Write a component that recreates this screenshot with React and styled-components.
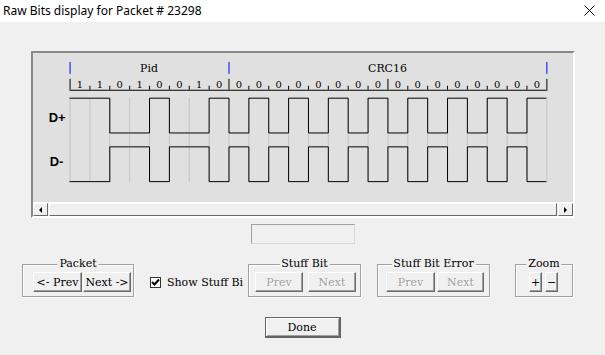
import styled, { createGlobalStyle } from "styled-components";

const GlobalStyle = createGlobalStyle`
  html, body {
    margin: 0;
    padding: 0;
    background: #f0f0f0;
  }
  body {
    width: 605px;
    height: 355px;
    overflow: hidden;
  }
`;

const UI_FONT = `"DejaVu Serif", "Liberation Serif", serif`;

const PID_BITS = [1, 1, 0, 1, 0, 0, 1, 0];
const CRC_BITS = new Array(16).fill(0);
const BITS = [...PID_BITS, ...CRC_BITS];
const X0 = 68;
const BIT_W = 20;

const Window = styled.div`
  width: 605px;
  height: 355px;
  background: #f0f0f0;
  display: flex;
  flex-direction: column;
  font-family: ${UI_FONT};
  color: #000;
`;

const TitleBar = styled.div`
  height: 22px;
  flex: none;
  background: #fff;
  display: flex;
  align-items: center;
  justify-content: space-between;
  padding: 0 10px 2px 3px;
  box-sizing: border-box;
  font-family: "Noto Sans", sans-serif;
  font-size: 12px;
`;

const Body = styled.div`
  display: flex;
  flex-direction: column;
  align-items: flex-start;
  padding-top: 29px;
`;

const Panel = styled.div`
  margin-left: 31px;
  width: 544px;
  height: 167px;
  box-sizing: border-box;
  border-style: solid;
  border-width: 2px;
  border-color: #8a8a8a #fff #fff #8a8a8a;
  background: #e0e0e0;
  display: flex;
  flex-direction: column;
`;

const Canvas = styled.svg`
  display: block;
  width: 540px;
  height: 150px;
  background: #e0e0e0;
  border-bottom: 1px solid #fff;
  box-sizing: border-box;
`;

const ScrollBar = styled.div`
  display: flex;
  height: 13px;
  background: #f0f0f0;
`;

const ScrollButton = styled.div`
  width: 15px;
  flex: none;
  box-sizing: border-box;
  display: flex;
  align-items: center;
  justify-content: center;
  border: 1px solid;
  border-color: #fff #696969 #696969 #fff;
  background: #f0f0f0;
`;

const Arrow = styled.span`
  width: 0;
  height: 0;
  border-top: 3px solid transparent;
  border-bottom: 3px solid transparent;
  ${(p) =>
    p.$dir === "left"
      ? "border-right: 3px solid #000;"
      : "border-left: 3px solid #000;"}
`;

const Thumb = styled.div`
  flex: 1;
  margin: 0 1px;
  box-sizing: border-box;
  border: 1px solid;
  border-color: #fff #696969 #696969 #fff;
  background: #f0f0f0;
`;

const Readout = styled.div`
  align-self: center;
  margin-top: 6px;
  width: 104px;
  height: 20px;
  box-sizing: border-box;
  border: 1px solid;
  border-color: #a0a0a0 #d8d8d8 #d8d8d8 #a0a0a0;
  background: #f0f0f0;
`;

const ControlsRow = styled.div`
  display: flex;
  align-items: flex-start;
  margin-top: 20px;
  margin-left: 22px;
`;

const GroupBox = styled.div`
  position: relative;
  width: ${(p) => p.$w}px;
  height: 33px;
  margin-right: ${(p) => p.$mr || 0}px;
  box-sizing: border-box;
  border: 1px solid #a0a0a0;
  box-shadow: inset 1px 1px #fff, 1px 1px #fff;
  padding: 7px 0 4px ${(p) => p.$pl}px;
  display: flex;
  gap: ${(p) => p.$gap}px;
`;

const Legend = styled.span`
  position: absolute;
  top: -8px;
  left: 50%;
  transform: translateX(-50%);
  padding: 0 2px;
  background: #f0f0f0;
  font-size: 11px;
  line-height: 14px;
  white-space: nowrap;
`;

const Button = styled.button`
  width: ${(p) => p.$w}px;
  height: 20px;
  margin: 0;
  padding: 0;
  box-sizing: border-box;
  font-family: ${UI_FONT};
  font-size: 11px;
  color: ${(p) => (p.disabled ? "#a0a0a0" : "#000")};
  text-shadow: ${(p) => (p.disabled ? "1px 1px #fff" : "none")};
  background: #f0f0f0;
  border: 1px solid;
  border-color: #fff #696969 #696969 #fff;
  box-shadow: inset -1px -1px #a0a0a0;
  white-space: nowrap;
`;

const CheckItem = styled.label`
  width: 98px;
  height: 33px;
  display: flex;
  align-items: center;
  padding-top: 3px;
  box-sizing: border-box;
  white-space: nowrap;
  font-size: 11px;
`;

const CheckBox = styled.span`
  width: 11px;
  height: 11px;
  flex: none;
  box-sizing: border-box;
  border: 1px solid #333;
  background: #fff;
  margin-right: 6px;
  display: flex;
  align-items: center;
  justify-content: center;
`;

const DoneButton = styled.button`
  align-self: center;
  margin-top: 20px;
  width: 76px;
  height: 21px;
  padding: 0;
  box-sizing: border-box;
  font-family: ${UI_FONT};
  font-size: 11px;
  color: #000;
  background: #f0f0f0;
  border-style: solid;
  border-color: #646464;
  border-width: 1px 2px 2px 1px;
  box-shadow: inset 1px 1px #fff, inset -1px -1px #a0a0a0;
`;

function levels(startHigh) {
  const out = [];
  let lvl = startHigh;
  BITS.forEach((b) => {
    if (b === 0) lvl = !lvl;
    out.push(lvl);
  });
  return out;
}

function wavePath(startHigh, yHigh, yLow) {
  const lv = levels(startHigh);
  let d = `M ${X0} ${lv[0] ? yHigh : yLow}`;
  lv.forEach((l, i) => {
    const x = X0 + i * BIT_W + 0.5;
    const y = l ? yHigh : yLow;
    if (i > 0 && l !== lv[i - 1]) d += ` L ${x} ${y}`;
    d += ` L ${x + BIT_W - (i === lv.length - 1 ? 0.5 : 0)} ${y}`;
  });
  return d;
}

function BitCanvas() {
  const edges = BITS.map((_, i) => X0 + i * BIT_W).concat(X0 + BITS.length * BIT_W);
  const markers = [68, 228, 548];
  const tall = [68, 228, 388, 548];
  return (
    <Canvas viewBox="33 53 540 150">
      {markers.map((x) => (
        <line key={x} x1={x + 0.5} x2={x + 0.5} y1={62} y2={74} stroke="#0000ff" />
      ))}
      <text x={148} y={72} fontFamily={UI_FONT} fontSize="11" textAnchor="middle">
        Pid
      </text>
      <text x={388} y={72} fontFamily={UI_FONT} fontSize="11" textAnchor="middle">
        CRC16
      </text>
      <line x1={68} x2={549} y1={90.5} y2={90.5} stroke="#000" />
      {edges.map((x) => (
        <line
          key={`t${x}`}
          x1={x + 0.5}
          x2={x + 0.5}
          y1={tall.includes(x) ? 79 : 86}
          y2={90}
          stroke="#000"
        />
      ))}
      {BITS.map((b, i) => (
        <text
          key={`b${i}`}
          x={X0 + i * BIT_W + 10.5}
          y={88}
          fontFamily={UI_FONT}
          fontSize="10"
          textAnchor="middle"
        >
          {b}
        </text>
      ))}
      {edges.map((x) => (
        <line key={`g${x}`} x1={x + 0.5} x2={x + 0.5} y1={98} y2={183} stroke="#c4c4c4" />
      ))}
      <path d={wavePath(true, 98.5, 133.5)} fill="none" stroke="#000" />
      <path d={wavePath(false, 147.5, 182.5)} fill="none" stroke="#000" />
      <text x={47} y={122} fontFamily="Liberation Sans, Arial, sans-serif" fontSize="13" fontWeight="bold">
        D+
      </text>
      <text x={48} y={167} fontFamily="Liberation Sans, Arial, sans-serif" fontSize="13" fontWeight="bold">
        D-
      </text>
    </Canvas>
  );
}

export default function App() {
  return (
    <>
      <GlobalStyle />
      <Window>
        <TitleBar>
          <span>Raw Bits display for Packet # 23298</span>
          <svg width="11" height="11" viewBox="0 0 11 11">
            <path d="M0.5 0.5 L10.5 10.5 M10.5 0.5 L0.5 10.5" stroke="#000" strokeWidth="1" />
          </svg>
        </TitleBar>
        <Body>
          <Panel>
            <BitCanvas />
            <ScrollBar>
              <ScrollButton>
                <Arrow $dir="left" />
              </ScrollButton>
              <Thumb />
              <ScrollButton>
                <Arrow $dir="right" />
              </ScrollButton>
            </ScrollBar>
          </Panel>
          <Readout />
          <ControlsRow>
            <GroupBox $w={112} $mr={16} $pl={10} $gap={1}>
              <Legend>Packet</Legend>
              <Button $w={49}>&lt;- Prev</Button>
              <Button $w={48}>Next -&gt;</Button>
            </GroupBox>
            <CheckItem>
              <CheckBox>
                <svg width="9" height="9" viewBox="0 0 9 9">
                  <path d="M1 4 L3.5 6.5 L8 1.5" fill="none" stroke="#000" strokeWidth="2" />
                </svg>
              </CheckBox>
              Show Stuff Bi
            </CheckItem>
            <GroupBox $w={113} $mr={16} $pl={6} $gap={5}>
              <Legend>Stuff Bit</Legend>
              <Button $w={48} disabled>Prev</Button>
              <Button $w={48} disabled>Next</Button>
            </GroupBox>
            <GroupBox $w={113} $mr={25} $pl={8} $gap={2}>
              <Legend>Stuff Bit Error</Legend>
              <Button $w={49} disabled>Prev</Button>
              <Button $w={47} disabled>Next</Button>
            </GroupBox>
            <GroupBox $w={58} $pl={13} $gap={3}>
              <Legend>Zoom</Legend>
              <Button $w={13}>+</Button>
              <Button $w={13}>−</Button>
            </GroupBox>
          </ControlsRow>
          <DoneButton>Done</DoneButton>
        </Body>
      </Window>
    </>
  );
}
